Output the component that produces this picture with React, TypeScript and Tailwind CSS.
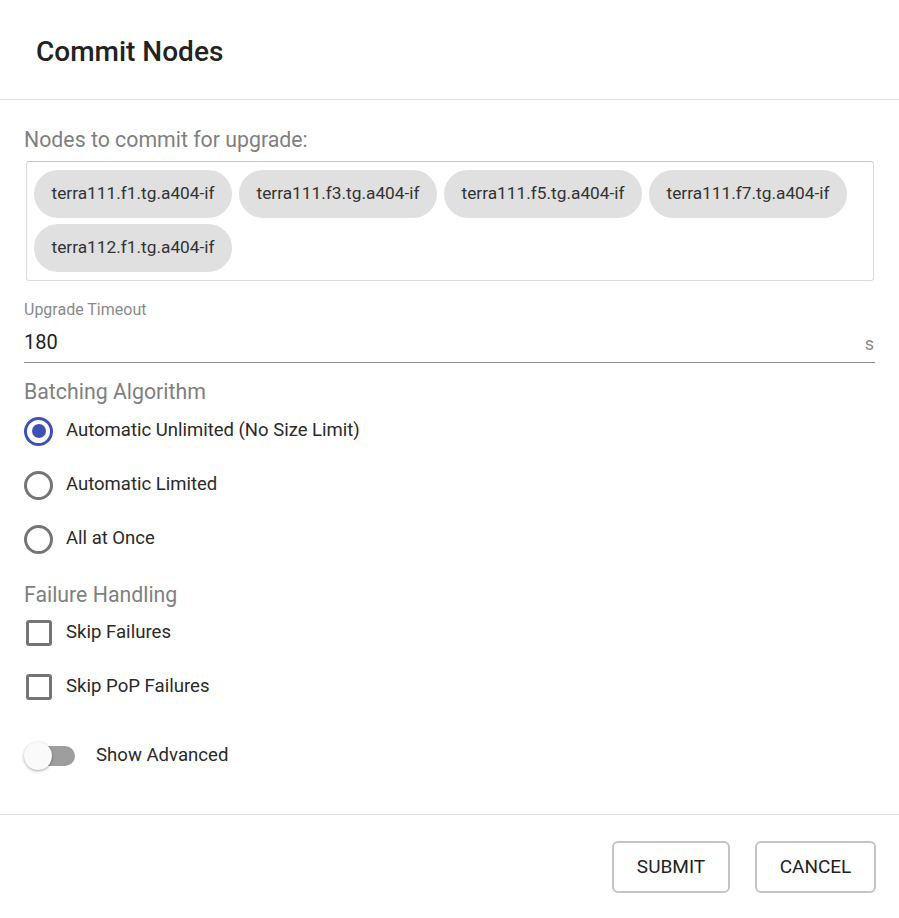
import { useState } from "react";

const NODES = [
  "terra111.f1.tg.a404-if",
  "terra111.f3.tg.a404-if",
  "terra111.f5.tg.a404-if",
  "terra111.f7.tg.a404-if",
  "terra112.f1.tg.a404-if",
];

const ALGORITHMS = ["Automatic Unlimited (No Size Limit)", "Automatic Limited", "All at Once"];

function Radio({ checked }: { checked: boolean }) {
  return (
    <span
      className={`flex h-[29px] w-[29px] items-center justify-center rounded-full border-[3px] ${
        checked ? "border-[#3f51b5]" : "border-[#757575]"
      }`}
    >
      {checked ? <span className="h-[14px] w-[14px] rounded-full bg-[#3f51b5]" /> : null}
    </span>
  );
}

export default function App() {
  const [algo, setAlgo] = useState(0);
  const [skip, setSkip] = useState([false, false]);

  return (
    <div className="flex min-h-[918px] w-[899px] flex-col bg-white text-[#212121] [font-family:Roboto,'Liberation_Sans',sans-serif]">
      <div className="flex h-[100px] items-center border-b border-[#e0e0e0] pl-[36px] pt-[4px]">
        <h2 className="text-[28px] font-medium leading-none text-[#222]">Commit Nodes</h2>
      </div>

      <div className="flex flex-col px-[24px] pt-[28px]">
        <p className="text-[21.3px] leading-[24px] text-[#7f7f7f]">Nodes to commit for upgrade:</p>
        <div className="mt-[9px] ml-[2px] mr-[1px] flex h-[120px] flex-wrap content-start gap-x-[7px] gap-y-[6px] rounded-[3px] border border-[#dcdcdc] border-t-[#c4c4c4] px-[7px] py-[8px]">
          {NODES.map((n) => (
            <span
              key={n}
              className="flex h-[48px] w-[198px] items-center justify-center rounded-full bg-[#e0e0e0] text-[17.3px] text-[#333]"
            >
              {n}
            </span>
          ))}
        </div>

        <label className="mt-[21px] text-[16px] leading-[16px] text-[#8a8a8a]">Upgrade Timeout</label>
        <div className="mt-[12px] flex items-end border-b border-[#8c8c8c] pb-[8px]">
          <span className="flex-1 text-[20px] leading-[24px]">180</span>
          <span className="mr-[1px] text-[18px] leading-[20px] text-[#8a8a8a]">s</span>
        </div>

        <p className="mt-[17px] text-[21.3px] leading-[24px] text-[#7f7f7f]">Batching Algorithm</p>
        <div className="flex flex-col">
          {ALGORITHMS.map((a, i) => (
            <button
              key={a}
              type="button"
              onClick={() => setAlgo(i)}
              className="flex h-[54px] items-center gap-[13px] text-left"
            >
              <Radio checked={algo === i} />
              <span className="text-[18.5px] text-[#2a2a2a]">{a}</span>
            </button>
          ))}
        </div>

        <p className="mt-[17px] text-[21.3px] leading-[24px] text-[#7f7f7f]">Failure Handling</p>
        <div className="-mt-[1px] flex flex-col">
          {["Skip Failures", "Skip PoP Failures"].map((l, i) => (
            <button
              key={l}
              type="button"
              onClick={() => setSkip((s) => s.map((v, j) => (j === i ? !v : v)))}
              className="flex h-[54px] items-center gap-[14px] text-left"
            >
              <span className="ml-[2px] flex h-[26px] w-[26px] items-center justify-center rounded-[3px] border-[3px] border-[#757575]">
                {skip[i] ? <span className="h-[12px] w-[12px] bg-[#757575]" /> : null}
              </span>
              <span className="text-[18.6px] text-[#2a2a2a]">{l}</span>
            </button>
          ))}
        </div>

        <div className="mt-[18px] flex h-[48px] items-center gap-[20px]">
          <span className="relative flex h-[28px] w-[52px] items-center">
            <span className="ml-[6px] h-[20px] w-[45px] rounded-full bg-[#9e9e9e]" />
            <span className="absolute left-0 top-0 h-[28px] w-[28px] rounded-full bg-[#fafafa] shadow-[0_1px_3px_rgba(0,0,0,0.35)]" />
          </span>
          <span className="text-[18.6px] text-[#2a2a2a]">Show Advanced</span>
        </div>
      </div>

      <div className="mt-[34px] flex items-center justify-end gap-[25px] border-t border-[#e0e0e0] pr-[23px] pt-[26px] pb-[25px]">
        <button
          type="button"
          className="h-[52px] w-[118px] rounded-[6px] border-2 border-[#c4c4c4] text-[19px] font-normal text-[#222]"
        >
          SUBMIT
        </button>
        <button
          type="button"
          className="h-[52px] w-[121px] rounded-[6px] border-2 border-[#c4c4c4] text-[19px] font-normal text-[#222]"
        >
          CANCEL
        </button>
      </div>
    </div>
  );
}
